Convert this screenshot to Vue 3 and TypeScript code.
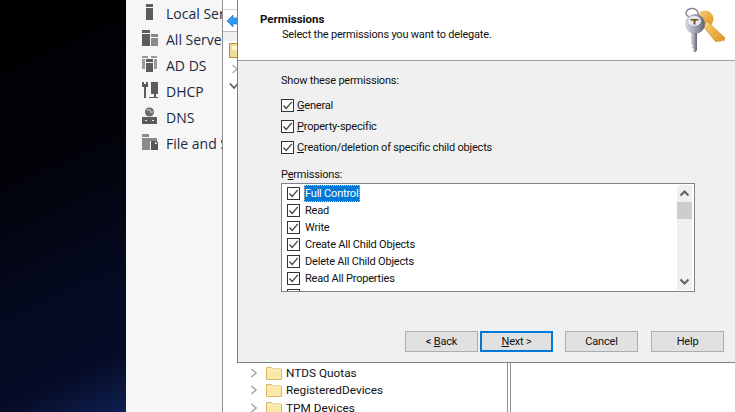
<script setup lang="ts">
interface Nav { label: string; icon: string }
const navItems: Nav[] = [
  { label: 'Local Server', icon: 'local' },
  { label: 'All Servers', icon: 'all' },
  { label: 'AD DS', icon: 'adds' },
  { label: 'DHCP', icon: 'dhcp' },
  { label: 'DNS', icon: 'dns' },
  { label: 'File and Storage Services', icon: 'file' },
]
const perms = ['Full Control', 'Read', 'Write', 'Create All Child Objects', 'Delete All Child Objects', 'Read All Properties', 'Write All Properties']
const folders = ['NTDS Quotas', 'RegisteredDevices', 'TPM Devices']
</script>

<template>
  <div class="screen">
    <div class="desktop"></div>
    <aside class="sidebar">
      <div v-for="n in navItems" :key="n.label" class="nav-row">
        <svg class="nav-icon" width="21" height="20" viewBox="0 0 21 20" shape-rendering="crispEdges">
          <g v-if="n.icon === 'local'" fill="#5c5c5c"><rect x="8" y="1" width="7" height="3" /><rect x="8" y="5" width="7" height="12" /></g>
          <g v-else-if="n.icon === 'all'"><rect x="4" y="1" width="8" height="3" fill="#5c5c5c" /><rect x="4" y="5" width="8" height="12" fill="#5c5c5c" /><rect x="13" y="5" width="7" height="3" fill="#8a8a8a" /><rect x="13" y="9" width="7" height="8" fill="#8a8a8a" /></g>
          <g v-else-if="n.icon === 'adds'"><rect x="4" y="1" width="6" height="2" fill="#9a9a9a" /><rect x="13" y="1" width="6" height="2" fill="#9a9a9a" /><rect x="4" y="4" width="3" height="10" fill="#9a9a9a" /><rect x="16" y="4" width="3" height="10" fill="#9a9a9a" /><rect x="8" y="4" width="7" height="3" fill="#5c5c5c" /><rect x="8" y="8" width="7" height="9" fill="#5c5c5c" /></g>
          <g v-else-if="n.icon === 'dhcp'" fill="#5c5c5c"><path d="M4 1h2v2h2V1h2v5H8v11H6V6H4z" /><rect x="13" y="1" width="7" height="12" /><rect x="16" y="13" width="2" height="3" /><rect x="11" y="16" width="9" height="1" /></g>
          <g v-else-if="n.icon === 'dns'"><circle cx="11.500" cy="5" r="4.500" fill="#6a6a6a" shape-rendering="auto" /><path d="M9 2h4v2h2v2h-3V4H9z" fill="#a8a8a8" /><rect x="4" y="10" width="15" height="7" fill="#5c5c5c" /><rect x="7" y="13" width="2" height="1" fill="#e6e6e6" /><rect x="14" y="13" width="2" height="1" fill="#e6e6e6" /></g>
          <g v-else><rect x="4" y="1" width="7" height="3" fill="#8a8a8a" /><rect x="4" y="5" width="8" height="12" fill="#8a8a8a" /><rect x="12" y="5" width="7" height="3" fill="#8a8a8a" /><path d="M13 8h5l2 2v7h-7z" fill="#555" /><path d="M17 9h1v1h1v1h-2z" fill="#eee" /></g>
        </svg>
        <span class="nav-label">{{ n.label }}</span>
      </div>
    </aside>

    <main class="mmc">
      <div class="mmc-top"></div>
      <div class="mmc-toolbar">
        <svg width="12" height="14" viewBox="0 0 12 14"><path d="M0 7 6 1v3h6v6H6v3z" fill="#2f9bf0" stroke="#1a6fc0" stroke-width=".6" /></svg>
      </div>
      <div class="mmc-band"></div>
      <div class="mmc-body">
        <div class="tree">
          <svg class="top-folder" width="15" height="15" viewBox="0 0 15 15"><rect x=".5" y=".5" width="14" height="14" fill="#f3dc96" stroke="#b39243" /><rect x="3" y="3" width="12" height="4" fill="#fff6d2" /></svg>
          <svg class="top-chevron" width="8" height="10" viewBox="0 0 8 10"><path d="M1.500 1 6 5 1.500 9" fill="none" stroke="#b5b5b5" stroke-width="1.600" /></svg>
          <svg class="down-chevron" width="10" height="8" viewBox="0 0 10 8"><path d="M1 1.500 5 6l4-4.500" fill="none" stroke="#555" stroke-width="1.500" /></svg>
          <div v-for="f in folders" :key="f" class="tree-row">
            <svg class="tree-chev" width="8" height="10" viewBox="0 0 8 10"><path d="M1.500 1 6 5 1.500 9" fill="none" stroke="#a6a6a6" stroke-width="1.600" /></svg>
            <svg class="tree-folder" width="16" height="14" viewBox="0 0 16 14"><path d="M.5 13.500V1.500h5l1.500 1.500h8.500v10.500z" fill="#fbe7a6" stroke="#d9b765" /><rect x="1" y="3.500" width="14" height="1" fill="#fff5cf" /></svg>
            <span>{{ f }}</span>
          </div>
        </div>
        <div class="pane-split"></div>
      </div>
    </main>

    <section class="dialog">
      <header class="dlg-head">
        <div class="dlg-titles">
          <div class="dlg-title">Permissions</div>
          <div class="dlg-sub">Select the permissions you want to delegate.</div>
        </div>
        <svg class="keys" width="48" height="52" viewBox="0 0 48 52">
          <defs>
            <linearGradient id="gold" x1="0" y1="0" x2="1" y2="1"><stop offset="0" stop-color="#fbd27a" /><stop offset="1" stop-color="#dc9120" /></linearGradient>
            <linearGradient id="steel" x1="0" y1="0" x2="1" y2="0"><stop offset="0" stop-color="#d9dce3" /><stop offset=".5" stop-color="#a0a4b2" /><stop offset="1" stop-color="#5f6372" /></linearGradient>
          </defs>
          <circle cx="25" cy="15" r="8.500" fill="url(#gold)" />
          <path d="M27 17 45 34l-1.500 3-2.500-1-1 2-2-1.500-1 1.500-2-1L23 22z" fill="url(#gold)" stroke="#c98a22" stroke-width=".6" />
          <ellipse cx="12" cy="9" rx="6" ry="4.500" fill="none" stroke="#868b9a" stroke-width="1.500" />
          <ellipse cx="15" cy="20" rx="10" ry="10" fill="url(#steel)" />
          <ellipse cx="14.500" cy="17" rx="6.500" ry="5" fill="#e8eaf0" />
          <path d="M10.500 15h8v1.500h-3v4h-2v-4h-3z" fill="#6b5320" />
          <path d="M11 29h6v17l-1.500 2.500-2-1v-3l-1.500-1 1-2-2-1z" fill="url(#steel)" />
        </svg>
      </header>
      <div class="dlg-content">
        <div class="show-label">Show these permissions:</div>
        <div class="show-list">
          <label class="show-row"><span class="cb"><svg width="11" height="11" viewBox="0 0 11 11"><path d="M1.500 5.500 4.200 8.500 9.800 1.800" fill="none" stroke="#444" stroke-width="1.300" /></svg></span><span><u>G</u>eneral</span></label>
          <label class="show-row"><span class="cb"><svg width="11" height="11" viewBox="0 0 11 11"><path d="M1.500 5.500 4.200 8.500 9.800 1.800" fill="none" stroke="#444" stroke-width="1.300" /></svg></span><span><u>P</u>roperty-specific</span></label>
          <label class="show-row"><span class="cb"><svg width="11" height="11" viewBox="0 0 11 11"><path d="M1.500 5.500 4.200 8.500 9.800 1.800" fill="none" stroke="#444" stroke-width="1.300" /></svg></span><span><u>C</u>reation/deletion of specific child objects</span></label>
        </div>
        <div class="perm-label">P<u>e</u>rmissions:</div>
        <div class="listbox">
          <div class="list-items">
            <div v-for="(p, i) in perms" :key="p" class="list-row">
              <span class="cb"><svg width="11" height="11" viewBox="0 0 11 11"><path d="M1.500 5.500 4.200 8.500 9.800 1.800" fill="none" stroke="#444" stroke-width="1.300" /></svg></span>
              <span class="item-text" :class="{ selected: i === 0 }">{{ p }}</span>
            </div>
          </div>
          <div class="scrollbar">
            <svg width="15" height="17" viewBox="0 0 15 17"><path d="M3.500 10.500 7.500 6.500l4 4" fill="none" stroke="#606060" stroke-width="2" /></svg>
            <div class="thumb"></div>
            <div class="track"></div>
            <svg width="15" height="17" viewBox="0 0 15 17"><path d="M3.500 6.500 7.500 10.500l4-4" fill="none" stroke="#606060" stroke-width="2" /></svg>
          </div>
        </div>
        <div class="buttons">
          <div class="btn-group">
            <button class="btn">&lt; <u>B</u>ack</button>
            <button class="btn primary"><u>N</u>ext &gt;</button>
          </div>
          <button class="btn">Cancel</button>
          <button class="btn">Help</button>
        </div>
      </div>
    </section>
  </div>
</template>

<style>
html, body { margin: 0; background: #fff; overflow: hidden; }
</style>

<style scoped>
.screen {
  position: relative;
  display: flex;
  width: 735px;
  height: 412px;
  overflow: hidden;
  font-family: Roboto, "Open Sans", sans-serif;
  color: #111;
}
.desktop {
  width: 126px;
  flex: none;
  background: linear-gradient(155deg, #000 0%, #02030a 40%, #040a20 70%, #060c26 87%, #0e2050 100%);
}
.sidebar {
  width: 96px;
  flex: none;
  box-sizing: border-box;
  background: #f6f6f6;
  overflow: hidden;
}
.nav-row {
  display: flex;
  align-items: center;
  height: 26px;
  padding-left: 12px;
  gap: 7px;
  white-space: nowrap;
}
.nav-icon { flex: none; }
.nav-label { font-family: "Open Sans", sans-serif; font-size: 14px; color: #1a2a44; }
.mmc {
  flex: 1;
  display: flex;
  flex-direction: column;
  background: #fff;
  border-left: 1px solid #8e8e8e;
  min-width: 0;
}
.mmc-top { height: 9px; border-bottom: 1px solid #d0d0d0; flex: none; }
.mmc-toolbar { height: 21px; display: flex; align-items: center; padding-left: 4px; flex: none; }
.mmc-band { height: 9px; background: #f0f0f0; border-top: 1px solid #bbb; flex: none; }
.mmc-body { flex: 1; display: flex; min-height: 0; }
.tree {
  position: relative;
  width: 284px;
  flex: none;
  box-sizing: border-box;
  padding-top: 323px;
  padding-left: 26px;
  font-size: 11.800px;
}
.top-folder { position: absolute; left: 6px; top: 2px; }
.top-chevron { position: absolute; left: 8px; top: 23px; }
.down-chevron { position: absolute; left: 6px; top: 41px; }
.tree-row { display: flex; align-items: center; height: 17.500px; white-space: nowrap; }
.tree-chev { margin-right: 8px; margin-left: 1px; flex: none; }
.tree-folder { margin-right: 4px; flex: none; }
.pane-split {
  width: 2px;
  flex: none;
  border-left: 1px solid #8e8e8e;
  border-right: 1px solid #8e8e8e;
}
.dialog {
  position: absolute;
  left: 237px;
  top: 0;
  width: 498px;
  height: 363px;
  box-sizing: border-box;
  display: flex;
  flex-direction: column;
  border-left: 1px solid #7f7f7f;
  border-bottom: 1px solid #7f7f7f;
  background: #f0f0f0;
  font-size: 11px;
  letter-spacing: -0.200px;
}
.dlg-head {
  height: 61px;
  flex: none;
  box-sizing: border-box;
  background: #fff;
  border-bottom: 1px solid #a0a0a0;
  display: flex;
  justify-content: space-between;
  padding: 12px 7px 0 22px;
}
.dlg-title { font-weight: 700; font-size: 11.500px; line-height: 15px; letter-spacing: 0; }
.dlg-sub { margin-left: 22px; line-height: 15px; }
.keys { margin-top: -8px; }
.dlg-content {
  flex: 1;
  display: flex;
  flex-direction: column;
  padding: 12px 40px 10px 43px;
  min-height: 0;
}
.show-label { line-height: 16px; }
.show-list { margin-top: 8px; display: flex; flex-direction: column; gap: 5px; }
.show-row { display: flex; align-items: center; gap: 3px; height: 16px; white-space: nowrap; }
.cb {
  width: 13px;
  height: 13px;
  flex: none;
  box-sizing: border-box;
  border: 1px solid #333;
  background: #fff;
  display: inline-flex;
}
.perm-label { margin-top: 12px; line-height: 16px; }
.listbox {
  margin-top: 0;
  height: 109px;
  box-sizing: border-box;
  border: 1px solid #82828c;
  background: #fff;
  display: flex;
  overflow: hidden;
}
.list-items { flex: 1; padding: 1px 0 0 5px; min-width: 0; }
.list-row { display: flex; align-items: center; gap: 4px; height: 17px; white-space: nowrap; }
.item-text { padding: 1px 1px 0; line-height: 16px; height: 17px; box-sizing: border-box; }
.item-text.selected { background: #0078d7; color: #fff; outline: 1px dotted #e8b98a; outline-offset: -1px; padding: 1px 2px 0 1px; }
.scrollbar {
  width: 15px;
  margin: 1px 2px 1px 0;
  flex: none;
  background: #f0f0f0;
  display: flex;
  flex-direction: column;
}
.scrollbar svg { flex: none; }
.thumb { height: 17px; background: #cdcdcd; flex: none; }
.track { flex: 1; }
.buttons {
  margin-top: auto;
  display: flex;
  gap: 13px;
  margin-right: -29px;
  margin-left: 124px;
}
.btn-group { display: flex; gap: 2px; margin-right: -1px; }
.btn {
  width: 73px;
  height: 21px;
  box-sizing: border-box;
  padding: 0;
  border: 1px solid #adadad;
  background: #e1e1e1;
  font: inherit;
  letter-spacing: inherit;
  color: #111;
}
.btn.primary { border: 2px solid #0078d7; }
</style>
